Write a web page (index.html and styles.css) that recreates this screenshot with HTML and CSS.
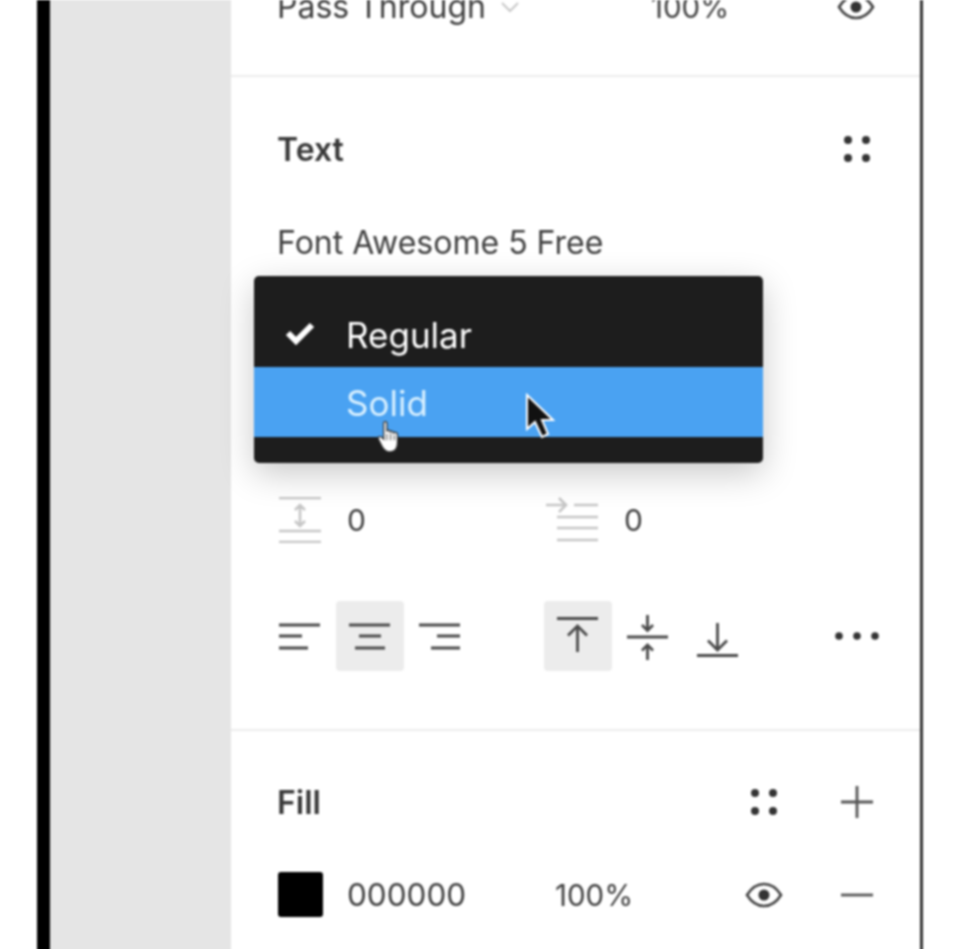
FILE: index.html
```html
<!DOCTYPE html>
<html lang="en">
<head>
<meta charset="UTF-8">
<meta name="viewport" content="width=device-width, initial-scale=1.0">
<title>Text properties</title>
<link rel="stylesheet" href="styles.css">
</head>
<body>

<div class="window">
  <div class="edge"></div>
  <div class="canvas"></div>

  <div class="panel">
    <section class="layer">
      <span class="blend">Pass Through</span>
      <svg class="chevron" width="20" height="12" viewBox="0 0 20 12"><path d="M2 2l8 8 8-8" fill="none" stroke="#c8c8c8" stroke-width="2"/></svg>
      <span class="layer-opacity">100%</span>
      <svg class="eye" width="38" height="26" viewBox="0 0 38 26"><path d="M2 13C7 5 13 2 19 2s12 3 17 11c-5 8-11 11-17 11S7 21 2 13z" fill="none" stroke="#444" stroke-width="2.6"/><circle cx="19" cy="13" r="5.5" fill="#333"/></svg>
    </section>

    <section class="text-section">
      <div class="head">
        <span class="title">Text</span>
        <svg class="dots" width="28" height="28" viewBox="0 0 28 28"><circle cx="5" cy="5" r="4"/><circle cx="23" cy="5" r="4"/><circle cx="5" cy="23" r="4"/><circle cx="23" cy="23" r="4"/></svg>
      </div>
      <div class="font-name">Font Awesome 5 Free</div>

      <div class="metrics">
        <svg class="m-icon" width="42" height="46" viewBox="0 0 42 46" fill="none" stroke="#c6c6c6" stroke-width="2.6">
          <path d="M0 1h42M0 34h42M0 45h42M21 9v19M16 13l5-5 5 5M16 24l5 5 5-5"/>
        </svg>
        <span class="m-value">0</span>
        <svg class="m-icon indent" width="54" height="46" viewBox="0 0 54 46" fill="none" stroke="#c6c6c6" stroke-width="2.6">
          <path d="M0 8h19M13 1l7 7-7 7M28 8h24M11 20h41M11 31h41M11 43h41"/>
        </svg>
        <span class="m-value">0</span>
      </div>

      <div class="aligns">
        <div class="btn">
          <svg width="42" height="28" viewBox="0 0 42 28" fill="none" stroke="#4a4a4a" stroke-width="2.8"><path d="M0 3h41M0 14h23M0 26h29"/></svg>
        </div>
        <div class="btn on">
          <svg width="42" height="28" viewBox="0 0 42 28" fill="none" stroke="#4a4a4a" stroke-width="2.8"><path d="M0 3h41M10 14h22M6 26h30"/></svg>
        </div>
        <div class="btn">
          <svg width="42" height="28" viewBox="0 0 42 28" fill="none" stroke="#4a4a4a" stroke-width="2.8"><path d="M0 3h41M18 14h23M12 26h29"/></svg>
        </div>
        <div class="gap"></div>
        <div class="btn on">
          <svg width="42" height="38" viewBox="0 0 42 38" fill="none" stroke="#4a4a4a" stroke-width="2.8"><path d="M0 1.500h41M20.500 9v26M11 18.500L20.500 9l9.500 9.500"/></svg>
        </div>
        <div class="btn v">
          <svg width="42" height="48" viewBox="0 0 42 48" fill="none" stroke="#4a4a4a" stroke-width="2.8"><path d="M0 25h41M20.500 3v15M15 13l5.500 5.500L26 13M20.500 33v15M15 38.500l5.500-5.500L26 38.500"/></svg>
        </div>
        <div class="btn v">
          <svg width="42" height="42" viewBox="0 0 42 42" fill="none" stroke="#4a4a4a" stroke-width="2.8"><path d="M0 40.500h41M20.500 8v27M11 25.500l9.500 9.500 9.500-9.500"/></svg>
        </div>
        <svg class="more" width="44" height="8" viewBox="0 0 44 8" fill="#333"><circle cx="4" cy="4" r="3.800"/><circle cx="22" cy="4" r="3.800"/><circle cx="40" cy="4" r="3.800"/></svg>
      </div>
    </section>

    <section class="fill-section">
      <div class="head">
        <span class="title">Fill</span>
        <svg class="dots fill-dots" width="28" height="28" viewBox="0 0 28 28"><circle cx="5" cy="5" r="4"/><circle cx="23" cy="5" r="4"/><circle cx="5" cy="23" r="4"/><circle cx="23" cy="23" r="4"/></svg>
        <svg class="plus" width="34" height="34" viewBox="0 0 34 34" fill="none" stroke="#555" stroke-width="2.8"><path d="M1 17h32M17 1v32"/></svg>
      </div>
      <div class="fill-row">
        <div class="swatch"></div>
        <span class="hex">000000</span>
        <span class="fill-opacity">100%</span>
        <svg class="eye" width="38" height="26" viewBox="0 0 38 26"><path d="M2 13C7 5 13 2 19 2s12 3 17 11c-5 8-11 11-17 11S7 21 2 13z" fill="none" stroke="#444" stroke-width="2.600"/><circle cx="19" cy="13" r="5.500" fill="#333"/></svg>
        <svg class="minus" width="34" height="4" viewBox="0 0 34 4"><path d="M1 2h32" stroke="#555" stroke-width="2.800"/></svg>
      </div>
    </section>

    <div class="menu">
      <div class="menu-item">
        <svg class="check" width="30" height="24" viewBox="0 0 30 24"><path d="M3 12l8 8L27 4" fill="none" stroke="#fff" stroke-width="6"/></svg>
        <span>Regular</span>
      </div>
      <div class="menu-item hover"><span>Solid</span></div>
    </div>

    <svg class="arrow-cursor" width="30" height="46" viewBox="0 0 30 46"><path d="M2 2v34l8-7 7 15 6-3-6-14h11z" fill="#111" stroke="#fff" stroke-width="2"/></svg>
    <svg class="hand-cursor" width="24" height="34" viewBox="0 0 22 32"><path d="M6 3c0-2 3-2 3 0v8c0-2 3-2 3 0v1c0-2 3-2 3 0v1c0-2 4-2 4 1v7c0 5-2 9-7 9-4 0-6-2-8-6l-3-6c-1-2 1-3 3-2l2 2z" fill="#fff" stroke="#333" stroke-width="1.200"/><path d="M9 13v6M12.500 13v6M16 14v5" stroke="#555" stroke-width="1"/></svg>
  </div>
</div>

</body>
</html>
```

FILE: styles.css
```css
html, body {
  margin: 0;
  padding: 0;
  height: 949px;
  background: #fff;
  overflow: hidden;
}

body {
  font-family: 'Inter', 'Liberation Sans', sans-serif;
  color: #404040;
}

.window {
  display: flex;
  height: 970px;
  padding-left: 37px;
  overflow: hidden;
  filter: blur(0.9px);
}

.edge {
  width: 13px;
  background: #000;
}

.canvas {
  width: 181px;
  background: #e5e5e5;
}

.panel {
  position: relative;
  width: 689px;
  border-right: 3px solid #333;
  background: #fff;
  font-size: 32px;
}

section {
  padding-left: 47px;
}

svg {
  display: block;
  flex: none;
}

/* layer row, cut by the top of the frame */
.layer {
  display: flex;
  align-items: center;
  height: 75px;
  border-bottom: 2px solid #ededed;
}

.layer .blend,
.layer .layer-opacity,
.layer .chevron,
.layer .eye {
  position: relative;
  top: -31px;
}

.blend {
  width: 222px;
  margin-left: -1px;
}

.chevron {
  margin-right: 131px;
  margin-left: 1px;
}

.layer-opacity {
  width: 186px;
  font-size: 29.5px;
}

.head {
  display: flex;
  align-items: center;
  height: 40px;
}

.title {
  margin-left: -1px;
  font-weight: 600;
  color: #383838;
}

.dots {
  margin-left: auto;
  margin-right: 49px;
  fill: #333;
}

.text-section {
  padding-top: 52px;
  padding-bottom: 58px;
  border-bottom: 2px solid #ededed;
}

.font-name {
  display: flex;
  align-items: center;
  height: 40px;
  margin-top: 53px;
  margin-left: -1px;
}

.metrics {
  display: flex;
  align-items: center;
  height: 46px;
  margin-top: 235px;
  font-size: 30px;
}

.m-icon {
  margin-left: 1px;
}

.m-value {
  width: 199px;
  margin-left: 26px;
}

.m-value:last-child {
  width: auto;
  margin-left: 24px;
}

.indent {
  margin-left: 0;
}

.aligns {
  display: flex;
  align-items: center;
  height: 70px;
  margin-top: 58px;
}

.btn {
  display: flex;
  align-items: center;
  justify-content: center;
  width: 68px;
  height: 70px;
  margin-left: -1px;
  border-radius: 4px;
}

.aligns .btn:first-child {
  justify-content: flex-start;
  width: 58px;
  margin-left: 1px;
}

.btn.on {
  background: #ececec;
}

.aligns .btn:nth-child(3) {
  width: 72px;
  margin-left: 0;
}

.btn.v {
  margin-left: 2px;
}

.gap {
  width: 69px;
}

.more {
  margin-left: 83px;
}

.fill-section {
  padding-top: 51px;
}

.fill-section .dots {
  margin-right: 62px;
}

.plus {
  margin-right: 46px;
}

.fill-row {
  display: flex;
  align-items: center;
  height: 45px;
  margin-top: 50px;
}

.swatch {
  width: 45px;
  height: 45px;
  border-radius: 3px;
  background: #000;
}

.hex {
  width: 208px;
  margin-left: 24px;
  font-size: 31.5px;
}

.fill-opacity {
  width: 190px;
  font-size: 29.5px;
}

.minus {
  margin-left: 57px;
}

/* font style dropdown */
.menu {
  position: absolute;
  left: 23px;
  top: 276px;
  width: 509px;
  height: 187px;
  padding-top: 31px;
  box-sizing: border-box;
  border-radius: 5px;
  background: #1d1d1d;
  color: #fff;
  font-size: 35px;
  box-shadow: 0 10px 34px rgba(0, 0, 0, 0.22);
}

.menu-item {
  display: flex;
  align-items: center;
  height: 60px;
  box-sizing: border-box;
  padding-left: 92px;
  padding-bottom: 5px;
  position: relative;
}

.menu-item.hover {
  height: 70px;
  padding-top: 2px;
  padding-bottom: 0;
  background: #4aa2f2;
  color: #d8f0ff;
}

.check {
  position: absolute;
  left: 31px;
  top: 14px;
}

.arrow-cursor {
  position: absolute;
  left: 294px;
  top: 393px;
}

.hand-cursor {
  position: absolute;
  left: 146px;
  top: 420px;
}
```
